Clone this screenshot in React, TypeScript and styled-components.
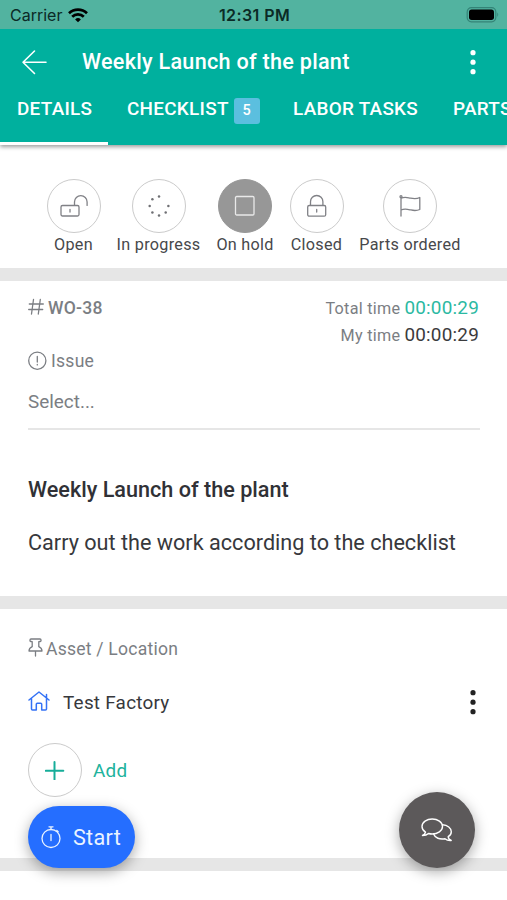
import React from 'react';
import styled, { createGlobalStyle } from 'styled-components';

const GlobalStyle = createGlobalStyle`
  * { box-sizing: border-box; }
  html, body { margin: 0; background: #fff; overflow: hidden; }
  body { font-family: Roboto, "Liberation Sans", sans-serif; color: #37383c; }
  button { font: inherit; letter-spacing: inherit; color: inherit; border: 0; background: none; padding: 0; }
  svg { display: block; flex: none; }
`;

const Screen = styled.div`
  position: relative;
  width: 507px;
  height: 900px;
  overflow: hidden;
  background: #fff;
`;

const Text = styled.span<{ $size: number; $spacing?: number; $weight?: number; $color?: string }>`
  font-size: ${p => p.$size}px;
  letter-spacing: ${p => p.$spacing ?? 0}px;
  font-weight: ${p => p.$weight ?? 400};
  color: ${p => p.$color ?? 'inherit'};
  white-space: nowrap;
`;

const Header = styled.header`
  height: 145px;
  background: #00b09e;
  color: #fff;
  box-shadow: 0 2px 4px rgba(0, 0, 0, 0.38);
`;

const StatusBar = styled.div`
  display: grid;
  grid-template-columns: 1fr auto 1fr;
  align-items: center;
  height: 29px;
  padding: 1px 8px 0 10px;
  background: #52b3a0;
  color: #0b2a26;
  font-family: Inter, Roboto, sans-serif;
`;

const Carrier = styled.div`
  display: flex;
  align-items: center;
  gap: 6px;
`;

const Battery = styled.div`
  justify-self: end;
`;

const TitleBar = styled.div`
  display: flex;
  align-items: center;
  height: 66px;
  padding: 0 31px 0 21px;
`;

const Title = styled.h1`
  flex: 1;
  margin: 0 0 0 34px;
  font-size: 21.6px;
  font-weight: 500;
  letter-spacing: 0.28px;
  line-height: 24px;
`;

const Tabs = styled.nav`
  display: flex;
  height: 50px;
`;

const Tab = styled.button<{ $width: number; $indent?: number; $active?: boolean }>`
  display: flex;
  flex: none;
  gap: 5px;
  width: ${p => p.$width}px;
  height: 50px;
  padding: 1px 0 0 ${p => p.$indent ?? 17}px;
  border-bottom: 3px solid ${p => (p.$active ? '#fff' : 'transparent')};
  font-size: 18.9px;
  font-weight: 500;
  letter-spacing: 0.28px;
  line-height: 25px;
  white-space: nowrap;
`;

const Count = styled.span`
  width: 26px;
  height: 26px;
  margin-top: 2px;
  border-radius: 3px;
  background: #5bbfdf;
  text-align: center;
  font-size: 14.500px;
  line-height: 26px;
`;

const StateList = styled.section`
  display: flex;
  justify-content: center;
  gap: 16px;
  height: 123px;
  padding-top: 34px;
`;

const State = styled.div<{ $width: number }>`
  display: flex;
  flex-direction: column;
  align-items: center;
  width: ${p => p.$width}px;
  gap: 2px;
  line-height: 20px;
`;

const Circle = styled.div<{ $filled?: boolean }>`
  display: grid;
  place-items: center;
  flex: none;
  width: 54px;
  height: 54px;
  border: 1px solid ${p => (p.$filled ? '#979797' : '#cbcbcb')};
  border-radius: 50%;
  background: ${p => (p.$filled ? '#979797' : '#fff')};
  color: ${p => (p.$filled ? '#e9e9e9' : '#808186')};
`;

const Divider = styled.div`
  height: 13px;
  background: #e6e6e6;
`;

const Order = styled.section`
  height: 315px;
  padding: 13px 28px 0 28px;
`;

const OrderHead = styled.div`
  display: flex;
  justify-content: space-between;
  height: 53px;
  color: #7b7e83;
`;

const Label = styled.div<{ $gap: number }>`
  display: flex;
  align-items: center;
  gap: ${p => p.$gap}px;
  height: 27px;
  color: #7b7e83;
`;

const Times = styled.div`
  display: flex;
  flex-direction: column;
  align-items: flex-end;
`;

const Time = styled.div`
  display: flex;
  align-items: baseline;
  gap: 4px;
  height: 27px;
  line-height: 27px;
`;

const SelectField = styled.div`
  height: 56px;
  margin-right: -1px;
  padding-top: 14px;
  border-bottom: 2px solid #e6e6e6;
  line-height: 27px;
`;

const Description = styled.div`
  display: flex;
  flex-direction: column;
  gap: 28px;
  padding-top: 47px;
  line-height: 25px;
`;

const Location = styled.section`
  height: 249px;
  padding: 26px 31px 0 28px;
`;

const AssetRow = styled.div`
  display: flex;
  align-items: center;
  height: 28px;
  margin-top: 26px;
`;

const AssetName = styled.div`
  flex: 1;
  margin-left: 13px;
`;

const AddRow = styled.div`
  display: flex;
  align-items: center;
  gap: 11px;
  margin-top: 27px;
`;

const StartButton = styled.button`
  position: absolute;
  left: 28px;
  top: 806px;
  display: flex;
  align-items: center;
  gap: 11px;
  width: 107px;
  height: 62px;
  padding-left: 12px;
  border-radius: 31px;
  background: #256eff;
  color: #eaf3ff;
  box-shadow: 0 4px 14px rgba(0, 0, 0, 0.34);
`;

const ChatButton = styled.button`
  position: absolute;
  left: 399px;
  top: 792px;
  display: grid;
  place-items: center;
  width: 76px;
  height: 76px;
  padding-top: 1px;
  border-radius: 50%;
  background: #5c595a;
  color: #fff;
  box-shadow: 0 4px 14px rgba(0, 0, 0, 0.34);
`;

type DrawingProps = { w: number; h: number; stroke?: number; color?: string; children: React.ReactNode };

const Drawing = ({ w, h, stroke = 1.3, color = 'currentColor', children }: DrawingProps) => (
  <svg width={w} height={h} viewBox={`0 0 ${w} ${h}`} fill="none" stroke={color} strokeWidth={stroke} strokeLinecap="round" strokeLinejoin="round">
    {children}
  </svg>
);

const Dots = ({ color }: { color: string }) => (
  <svg width="6" height="26" viewBox="0 0 6 26" fill={color}>
    <circle cx="3" cy="3.7" r="2.6" />
    <circle cx="3" cy="13.2" r="2.6" />
    <circle cx="3" cy="22.7" r="2.6" />
  </svg>
);

const OpenIcon = () => (
  <Drawing w={28} h={24}>
    <rect x="1" y="11.5" width="18" height="10.5" rx="1.5" />
    <path d="M14.500 11V8a6.300 6.300 0 0 1 12.600 0v3.400M10 15.500v2.500" />
  </Drawing>
);

const ProgressIcon = () => (
  <svg width="24" height="24" viewBox="0 0 24 24" fill="#6f7074">
    {[[12, 2.5], [5.4, 5.2], [2.7, 12], [5.4, 18.5], [12, 21.4], [18.7, 18.5], [21.4, 12]].map(([x, y]) => (
      <circle key={`${x}-${y}`} cx={x} cy={y} r="1.25" />
    ))}
  </svg>
);

const HoldIcon = () => (
  <Drawing w={22} h={22}><rect x="1.500" y="1.500" width="18.500" height="18.500" rx="1.200" /></Drawing>
);

const ClosedIcon = () => (
  <Drawing w={20} h={24}>
    <rect x=".7" y="11.500" width="18" height="10.700" rx="1.500" />
    <path d="M3.500 11V7.700a6.200 6.200 0 0 1 12.400 0v3.300M9.700 15.500v2.500" />
  </Drawing>
);

const FlagIcon = () => (
  <Drawing w={24} h={24}>
    <path d="M3 3.500V22M3 4.200c4-1.700 6-.7 9.500 0s6 1.100 9.300-.7V15.500c-4 1.800-6 1.200-9.300.4S6.500 14.300 3 16" />
    <circle cx="3" cy="2.700" r="1" />
  </Drawing>
);

const PinIcon = () => (
  <Drawing w={15} h={22}>
    <path d="M3 1h9q1 0 1 1v.8q0 .7-.8.7l-1.400.2v5q3.200 1.500 3.200 4.300H1q0-2.800 3.200-4.300V3.700L2.800 3.500Q2 3.500 2 2.800V2q0-1 1-1ZM7.500 13V18" />
  </Drawing>
);

const HomeIcon = () => (
  <Drawing w={22} h={24} stroke={1.500} color="#3472f5">
    <path d="M1 10 11 2l10 8M3.500 8.800v10.200q0 1 1 1H8.300v-5.700q0-1 1-1h3.400q1 0 1 1v5.700h3.800q1 0 1-1V8.800M18.500 7.700V4.500" />
  </Drawing>
);

const StopwatchIcon = () => (
  <Drawing w={22} h={25}>
    <circle cx="11" cy="13.500" r="9" />
    <path d="M9 1.800h4M11 2v2.500M11 9.500v6M16.800 5.500l1.400 1.200" />
  </Drawing>
);

const ChatIcon = () => (
  <Drawing w={32} h={25} stroke={1.400}>
    <path d="M4.500 14.200C2.100 12.700 1 10.800 1 8.500 1 4.300 5.700 1 11.200 1S21.500 4.300 21.500 8.500 16.700 16 11.200 16c-1.400 0-2.600-.2-3.700-.5C5.900 17 3.900 17.500 1.500 17.500c1.800-.8 2.500-1.700 3-3.300Z" />
    <path d="M21.500 6.700c5 .3 8.800 3.300 8.800 7 0 2.200-1.100 3.900-3.100 5 .1 1.700 1.200 3 3 3.800-2.600.2-4.700-.4-6.200-1.800-5.200 1-10-.7-11.400-4.700" />
  </Drawing>
);

const WifiIcon = () => (
  <svg width="20" height="15" viewBox="0 0 20 15" fill="none" stroke="#000" strokeWidth="2.700">
    <path d="M1 5.200a13 13 0 0 1 18 0M4.200 8.700a8.200 8.200 0 0 1 11.600 0" />
    <path d="M10 14.300 7.100 11.500a4.200 4.200 0 0 1 5.800 0Z" fill="#000" stroke="none" />
  </svg>
);

const BatteryIcon = () => (
  <svg width="33" height="16" viewBox="0 0 33 16">
    <rect x="1.200" y=".7" width="28.600" height="14.100" rx="4.200" fill="none" stroke="#348477" strokeWidth="1.200" />
    <rect x="3" y="2.500" width="25" height="10.500" rx="2.700" fill="#000" />
    <path d="M31.300 5.500q1.800 2.200 0 4.400Z" fill="#348477" />
  </svg>
);

const states = [
  { name: 'Open', width: 54, icon: <OpenIcon /> },
  { name: 'In progress', width: 84, icon: <ProgressIcon /> },
  { name: 'On hold', width: 57, icon: <HoldIcon />, current: true },
  { name: 'Closed', width: 54, icon: <ClosedIcon /> },
  { name: 'Parts ordered', width: 101, icon: <FlagIcon /> },
];

export default function App() {
  return (
    <Screen>
      <GlobalStyle />
      <Header>
        <StatusBar>
          <Carrier><Text $size={16}>Carrier</Text><WifiIcon /></Carrier>
          <Text $size={16} $weight={600} $spacing={0.4}>12:31 PM</Text>
          <Battery><BatteryIcon /></Battery>
        </StatusBar>
        <TitleBar>
          <Drawing w={27} h={26} stroke={1.6}><path d="M25 13.300H2M13.500 2 2 13.300l11.500 11.200" /></Drawing>
          <Title>Weekly Launch of the plant</Title>
          <Dots color="#fff" />
        </TitleBar>
        <Tabs>
          <Tab $width={108} $active>DETAILS</Tab>
          <Tab $width={168} $indent={19}>CHECKLIST<Count>5</Count></Tab>
          <Tab $width={160}>LABOR TASKS</Tab>
          <Tab $width={100}>PARTS</Tab>
        </Tabs>
      </Header>
      <StateList>
        {states.map(s => (
          <State key={s.name} $width={s.width}>
            <Circle $filled={s.current}>{s.icon}</Circle>
            <Text $size={16.2} $spacing={0.28} $color="#47484b">{s.name}</Text>
          </State>
        ))}
      </StateList>
      <Divider />
      <Order>
        <OrderHead>
          <Label $gap={4}>
            <Drawing w={16} h={19}><path d="M5.500 1.500 3.500 16M12.300 1.500l-2 14.500M1.300 6h14M.7 11.500H14.700" /></Drawing>
            <Text $size={17.57} $weight={500} $spacing={0.25}>WO-38</Text>
          </Label>
          <Times>
            <Time><Text $size={16.2} $spacing={0.28}>Total time</Text><Text $size={18.9} $spacing={0.22} $color="#2bb9a2">00:00:29</Text></Time>
            <Time><Text $size={16.2} $spacing={0.28}>My time</Text><Text $size={18.9} $spacing={0.22} $color="#3b3b3d">00:00:29</Text></Time>
          </Times>
        </OrderHead>
        <Label $gap={4}>
          <Drawing w={19} h={20}><circle cx="9.300" cy="9.700" r="8.600" /><path d="M9.300 5.500v5.500M9.300 13.500v.4" /></Drawing>
          <Text $size={17.57} $spacing={0.25}>Issue</Text>
        </Label>
        <SelectField><Text $size={18.9} $color="#7b7e83">Select...</Text></SelectField>
        <Description>
          <Text $size={21.63} $weight={500} $color="#303136">Weekly Launch of the plant</Text>
          <Text $size={21.63} $color="#37383c">Carry out the work according to the checklist</Text>
        </Description>
      </Order>
      <Divider />
      <Location>
        <Label $gap={3}><PinIcon /><Text $size={17.57} $spacing={0.22}>Asset / Location</Text></Label>
        <AssetRow>
          <HomeIcon />
          <AssetName><Text $size={18.9} $spacing={0.25}>Test Factory</Text></AssetName>
          <Dots color="#222" />
        </AssetRow>
        <AddRow>
          <Circle><Drawing w={20} h={20} stroke={2} color="#16ad99"><path d="M9.500 2v17.500M.8 10.800h17.500" /></Drawing></Circle>
          <Text $size={18.9} $spacing={0.25} $color="#20b39d">Add</Text>
        </AddRow>
      </Location>
      <Divider />
      <StartButton><StopwatchIcon /><Text $size={21.6} $spacing={0.3}>Start</Text></StartButton>
      <ChatButton><ChatIcon /></ChatButton>
    </Screen>
  );
}
